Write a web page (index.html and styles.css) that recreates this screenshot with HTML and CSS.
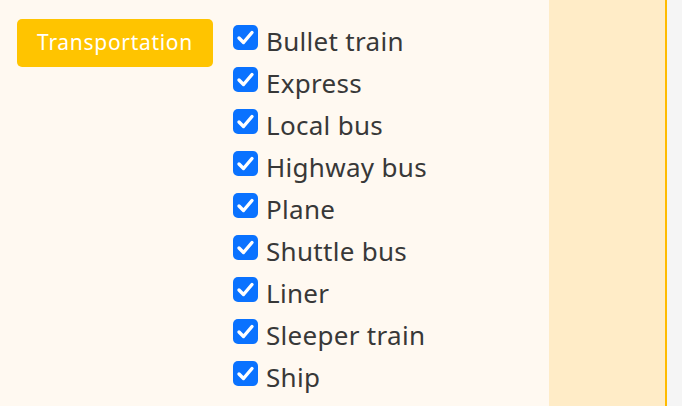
FILE: index.html
```html
<!DOCTYPE html>
<html>
<head>
<meta charset="utf-8">
<link rel="stylesheet" href="styles.css">
</head>
<body>
<div class="layout">
  <main class="main">
    <div class="tag">Transportation</div>
    <ul class="list">
      <li class="row"><input type="checkbox" class="cb" checked><span class="label">Bullet train</span></li>
      <li class="row"><input type="checkbox" class="cb" checked><span class="label">Express</span></li>
      <li class="row"><input type="checkbox" class="cb" checked><span class="label">Local bus</span></li>
      <li class="row"><input type="checkbox" class="cb" checked><span class="label">Highway bus</span></li>
      <li class="row"><input type="checkbox" class="cb" checked><span class="label">Plane</span></li>
      <li class="row"><input type="checkbox" class="cb" checked><span class="label">Shuttle bus</span></li>
      <li class="row"><input type="checkbox" class="cb" checked><span class="label">Liner</span></li>
      <li class="row"><input type="checkbox" class="cb" checked><span class="label">Sleeper train</span></li>
      <li class="row"><input type="checkbox" class="cb" checked><span class="label">Ship</span></li>
    </ul>
  </main>
  <aside class="side"></aside>
  <div class="rest"></div>
</div>
</body>
</html>
```
FILE: styles.css
```css
html, body {
  margin: 0;
  padding: 0;
  height: 100%;
}
body {
  font-family: "Noto Sans", "Open Sans", sans-serif;
  background: #f5f5f5;
  overflow: hidden;
}
.layout {
  display: flex;
  height: 406px;
}
.main {
  width: 549px;
  background: #fff9f1;
  display: flex;
  align-items: flex-start;
  padding: 16px 0 0 17px;
  box-sizing: border-box;
}
.tag {
  margin-top: 3px;
  width: 196px;
  height: 48px;
  box-sizing: border-box;
  background: #ffc400;
  color: #fff;
  border-radius: 5px;
  font-size: 21px;
  letter-spacing: 0.7px;
  line-height: 46px;
  text-align: center;
  margin-right: 20px;
}
.list {
  list-style: none;
  margin: 0;
  padding: 0;
}
.row {
  display: flex;
  align-items: center;
  height: 42px;
  font-size: 26px;
  letter-spacing: 0.3px;
  color: #383838;
}
.label {
  padding-top: 8px;
}
.cb {
  appearance: none;
  -webkit-appearance: none;
  margin: 0 8px 0 0;
  width: 25px;
  height: 25px;
  border-radius: 5px;
  background-color: #0a72ff;
  background-image: url("data:image/svg+xml,%3Csvg xmlns='http://www.w3.org/2000/svg' viewBox='0 0 25 25'%3E%3Cpath d='M6 13l4.5 4.5L19 7.5' fill='none' stroke='white' stroke-width='3.4' stroke-linecap='round' stroke-linejoin='round'/%3E%3C/svg%3E");
  background-size: 100% 100%;
  flex: none;
}
.side {
  width: 116px;
  background: #ffecc7;
  border-right: 2px solid #ffbb00;
}
.rest {
  flex: 1;
  background: #f5f5f5;
}
```
